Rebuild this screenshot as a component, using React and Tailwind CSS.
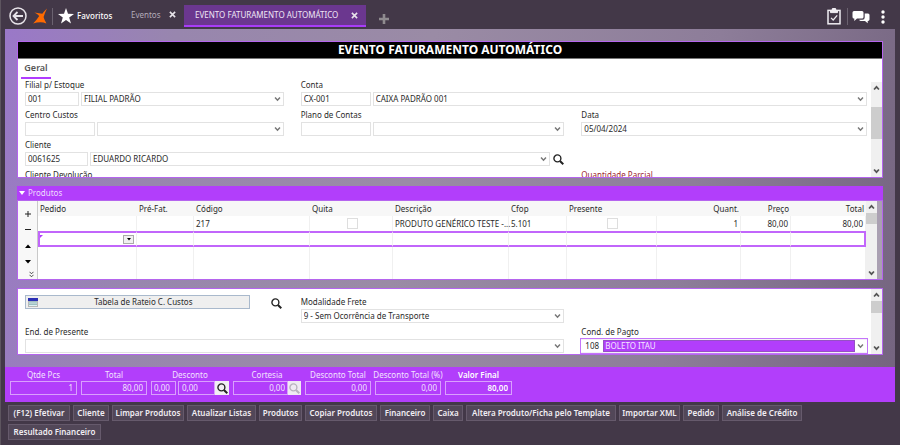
import React from "react";

const ICON_X = "M1 1L7 7M7 1L1 7";

function Chevron({ className = "", up = false, bold = false }) {
  return (
    <svg viewBox="0 0 8 6" className={className} fill="none" stroke="currentColor" strokeWidth={bold ? 2 : 1.7} aria-hidden="true">
      <path d={up ? "M1.2 4.7L4 1.7L6.8 4.7" : "M1.2 1.3L4 4.3L6.8 1.3"} />
    </svg>
  );
}

function Magnifier({ className = "" }) {
  return (
    <svg viewBox="0 0 12 12" className={className} fill="none" stroke="currentColor" aria-hidden="true">
      <circle cx="4.8" cy="4.8" r="3.8" strokeWidth="1.5" />
      <path d="M7.6 7.6L11.2 11.2" strokeWidth="2.2" />
    </svg>
  );
}

function IconButton({ label, className = "", children }) {
  return (
    <button type="button" aria-label={label} className={`flex shrink-0 items-center justify-center ${className}`}>
      {children}
    </button>
  );
}

function Combo({ label, value = "", id, className = "", selectClass = "" }) {
  return (
    <div className={`relative min-w-0 flex-1 ${className}`}>
      <select
        id={id}
        aria-label={id ? undefined : label}
        defaultValue={value}
        className={`block h-[14px] w-full appearance-none rounded-none border border-[#e2e2e2] bg-white pr-4 pl-[2px] leading-3 outline-none ${selectClass}`}
      >
        <option value={value}>{value}</option>
      </select>
      <Chevron className="pointer-events-none absolute top-1 right-[3px] h-[6px] w-[7px] text-[#777]" />
    </div>
  );
}

function Field({ id, label, code, codeWidth = "", value, children, className = "", labelClass = "" }) {
  return (
    <div className={`min-w-0 ${className}`}>
      <label htmlFor={id} className={`block h-[13px] leading-3 whitespace-nowrap ${labelClass}`}>
        {label}
      </label>
      <div className="flex gap-[2px]">
        {code !== undefined && (
          <input id={id} defaultValue={code} className={`h-[14px] shrink-0 border border-[#e2e2e2] bg-white pb-px pl-[2px] outline-none ${codeWidth}`} />
        )}
        <Combo label={label} id={code === undefined ? id : undefined} value={value} />
        {children}
      </div>
    </div>
  );
}

function Scrollbar({ className = "", thumb }) {
  return (
    <div className={`flex w-[11px] shrink-0 flex-col bg-[#f0f0f0] text-[#555] ${className}`} aria-hidden="true">
      <span className="flex h-3 items-center justify-center">
        <Chevron up bold className="h-[6px] w-[7px]" />
      </span>
      <span className="flex-1">
        <span className={`block bg-[#cdcdcd] ${thumb}`} />
      </span>
      <span className="flex h-3 items-center justify-center">
        <Chevron bold className="h-[6px] w-[7px]" />
      </span>
    </div>
  );
}

function TopBar() {
  return (
    <header className="flex h-[29px] items-start pr-[14px] pl-2 text-white">
      <IconButton label="Voltar" className="mt-[7px]">
        <svg viewBox="0 0 18 18" className="size-[18px]" fill="none" stroke="#e8e4ea" strokeWidth="1.5">
          <circle cx="9" cy="9" r="8" />
          <path d="M14 9H5M8.5 5L4.5 9L8.5 13" strokeWidth="1.8" />
        </svg>
      </IconButton>
      <svg viewBox="0 0 15 16" className="mt-2 ml-[6px] h-4 w-[15px]" fill="#ff6a00" aria-hidden="true">
        <path d="M14 .4C11.8 2.3 10.6 4 9.3 5.8L1.4 4.6C3.2 5.5 5 6.6 6.2 8C4.6 10.6 2.6 13.2 .2 15.6C4.4 14.2 9.4 13.8 13.4 15.4C12.4 13.4 11 11 10.6 9C11.4 6 12.6 3.2 14 .4Z" />
      </svg>
      <span className="mt-2 ml-[4px] h-[17px] w-px bg-[#6b6270]" />
      <a href="#favoritos" className="mt-2 ml-[5px] flex h-4 items-center gap-[3px] font-medium">
        <svg viewBox="0 0 16 16" className="size-4" fill="#fff" aria-hidden="true">
          <path d="M8 0L10 5.8L16 5.9L11.2 9.5L13 15.6L8 12L3 15.6L4.8 9.5L0 5.9L6 5.8Z" />
        </svg>
        <span className="w-[37px]">Favoritos</span>
      </a>
      <nav className="ml-[17px] flex items-start">
        <div className="flex h-[29px] items-center">
          <a href="#eventos" className="w-[37px] text-[#b3abb8]">Eventos</a>
          <IconButton label="Fechar Eventos" className="size-[8px]">
            <svg viewBox="0 0 8 8" className="size-[7px]" stroke="#e8e4ea" strokeWidth="1.8"><path d={ICON_X} /></svg>
          </IconButton>
        </div>
        <div className="mt-[5px] ml-2 flex h-[22px] w-[182px] items-center justify-between border-b-2 border-[#a83cf8] bg-[#6b378f] pr-2 pl-[11px]">
          <a href="#evento" aria-current="page" className="whitespace-nowrap text-[#efe6f5]">EVENTO FATURAMENTO AUTOMÁTICO</a>
          <IconButton label="Fechar aba" className="size-[8px]">
            <svg viewBox="0 0 8 8" className="size-[7px]" stroke="#e8e4ea" strokeWidth="1.8"><path d={ICON_X} /></svg>
          </IconButton>
        </div>
        <IconButton label="Nova aba" className="mt-[14px] ml-[13px]">
          <svg viewBox="0 0 10 10" className="size-[10px]" stroke="#8f8b8f" strokeWidth="2.6"><path d="M5 0V10M0 5H10" /></svg>
        </IconButton>
      </nav>
      <div className="mt-2 ml-auto flex h-[17px] items-center">
        <IconButton label="Tarefas">
          <svg viewBox="0 0 14 17" className="h-[17px] w-[14px]" fill="none" stroke="#f0edf2" strokeWidth="1.5">
            <rect x="1" y="2.4" width="12" height="13.4" />
            <path d="M3.5 2.6H10.5V4.6H3.5Z" fill="#f0edf2" strokeWidth="1" />
            <path d="M5.4 2A1.6 1.6 0 0 1 8.6 2" fill="#f0edf2" />
            <path d="M4 9.8L6.2 12L10.2 7.4" strokeWidth="1.2" />
          </svg>
        </IconButton>
        <span className="mr-1 ml-[6px] h-[17px] w-px bg-[#6b6270]" />
        <IconButton label="Mensagens">
          <svg viewBox="0 0 18 14" className="h-[14px] w-[18px]" fill="#fff">
            <path d="M2 1H10Q11.5 1 11.5 2.5V7Q11.5 8.5 10 8.5H5L2.3 11V8.5H2Q.5 8.5 .5 7V2.5Q.5 1 2 1Z" />
            <path d="M12.7 3.6H16Q17.5 3.6 17.5 5.1V9.6Q17.5 11 16 11H15.7V13.2L13 11H9Q7.4 11 7.2 9.7H10.5Q12.7 9.5 12.7 7.4Z" />
          </svg>
        </IconButton>
        <IconButton label="Mais opções" className="ml-[10px]">
          <svg viewBox="0 0 6 14" className="h-[14px] w-[6px]" fill="#fff">
            <circle cx="3" cy="2" r="1.7" /><circle cx="3" cy="7" r="1.7" /><circle cx="3" cy="12" r="1.7" />
          </svg>
        </IconButton>
      </div>
    </header>
  );
}

const GRID = "grid min-w-0 flex-1 grid-cols-[259fr_264fr_286fr] content-start gap-x-[17px] gap-y-[3px] pl-[7px] pr-1";

function GeneralPanel() {
  return (
    <section className="flex h-[137px] flex-col overflow-hidden border border-[#b565ee] bg-white">
      <h1 className="h-[17px] shrink-0 border-b border-[#777] bg-black text-center text-[12px] leading-4 font-bold text-white">
        EVENTO FATURAMENTO AUTOMÁTICO
      </h1>
      <div className="h-5 shrink-0 pl-[3px]">
        <button type="button" className="h-5 w-[30px] border-b-2 border-[#b03cff] text-[9px] font-semibold text-[#555]">Geral</button>
      </div>
      <div className="flex min-h-0 flex-1">
        <div className={GRID}>
          <Field id="filial" label="Filial p/ Estoque" code="001" codeWidth="w-[54px]" value="FILIAL PADRÃO" />
          <Field id="conta" label="Conta" code="CX-001" codeWidth="w-[70px]" value="CAIXA PADRÃO 001" className="col-span-2" />
          <Field id="centro" label="Centro Custos" code="" codeWidth="w-[70px]" />
          <Field id="plano" label="Plano de Contas" code="" codeWidth="w-[70px]" />
          <Field id="data" label="Data" value="05/04/2024" />
          <Field id="cliente" label="Cliente" code="0061625" codeWidth="w-[63px]" value="EDUARDO RICARDO" className="col-span-2">
            <IconButton label="Buscar cliente" className="h-[14px] w-3 text-[#222]"><Magnifier className="size-[11px]" /></IconButton>
          </Field>
          <span />
          <Field id="devolucao" label="Cliente Devolução" code="" codeWidth="w-[63px]" className="col-span-2" />
          <Field id="parcial" label="Quantidade Parcial" labelClass="text-[#9c2530]" />
        </div>
        <Scrollbar className="mt-[3px]" thumb="mt-[13px] h-8" />
      </div>
    </section>
  );
}

const COLUMNS = [
  { name: "Pedido", width: "w-[99px]" },
  { name: "Pré-Fat.", width: "w-[57px]" },
  { name: "Código", width: "w-[116px]" },
  { name: "Quita", width: "w-[83px]" },
  { name: "Descrição", width: "w-[116px]" },
  { name: "Cfop", width: "w-[58px]" },
  { name: "Presente", width: "w-[90px]" },
  { name: "Quant.", width: "w-[84px]", right: true },
  { name: "Preço", width: "w-[50px]", right: true },
  { name: "Total", width: "w-[75px]", right: true },
];

const PRODUCT = ["", "", "217", false, "PRODUTO GENÉRICO TESTE -...", "5.101", false, "1", "80,00", "80,00"];

function ProductsPanel() {
  return (
    <section className="mt-2">
      <h2 className="bg-[#b23efb] text-[#f0dcff]">
        <button type="button" aria-expanded="true" className="flex h-[14px] w-full items-center gap-[3px] pl-[2px] leading-[10px]">
          <svg viewBox="0 0 6 4" className="h-1 w-[6px]" fill="#fff" aria-hidden="true"><path d="M0 0H6L3 4Z" /></svg>
          Produtos
        </button>
      </h2>
      <div className="flex h-[80px] overflow-hidden border border-[#b565ee] bg-white">
        <div className="flex w-5 shrink-0 flex-col items-center border-r border-[#c9c9c9] bg-[#f8f8f8] pt-[5px] text-[#222]">
          <IconButton label="Adicionar" className="h-4 w-4">
            <svg viewBox="0 0 6 6" className="size-[6px]" stroke="currentColor" strokeWidth="1"><path d="M3 0V6M0 3H6" /></svg>
          </IconButton>
          <IconButton label="Remover" className="h-4 w-4">
            <svg viewBox="0 0 6 6" className="size-[6px]" stroke="currentColor" strokeWidth="1"><path d="M0 2.5H6" /></svg>
          </IconButton>
          <IconButton label="Subir" className="h-4 w-4">
            <svg viewBox="0 0 6 4" className="h-[4px] w-[6px]"><path d="M0 4H6L3 .5Z" /></svg>
          </IconButton>
          <IconButton label="Descer" className="h-4 w-4">
            <svg viewBox="0 0 6 4" className="h-[4px] w-[6px]"><path d="M0 0H6L3 3.5Z" /></svg>
          </IconButton>
          <IconButton label="Mais ações" className="mr-[3px] h-2 w-[5px] self-end">
            <svg viewBox="0 0 5 7" className="h-[7px] w-[5px]" fill="none" stroke="currentColor" strokeWidth=".8"><path d="M.5 .8L2.5 2.8L4.5 .8M.5 3.8L2.5 5.8L4.5 3.8" /></svg>
          </IconButton>
        </div>
        <div className="min-w-0 flex-1">
          <table className="w-full table-fixed border-separate border-spacing-0">
            <thead>
              <tr className="h-[15px] bg-[#f7f7f7] text-left">
                {COLUMNS.map((c) => (
                  <th key={c.name} scope="col" className={`px-[2px] font-normal ${c.width} ${c.right ? "text-right" : ""}`}>{c.name}</th>
                ))}
              </tr>
            </thead>
            <tbody>
              <tr className="h-[15px]">
                {PRODUCT.map((v, i) => (
                  <td key={i} className={`border-r border-[#f0f0f0] pl-[2px] whitespace-nowrap ${COLUMNS[i].right ? "pr-[2px] text-right" : ""}`}>
                    {v === false ? (
                      <input type="checkbox" aria-label={COLUMNS[i].name} className="mx-auto block size-[11px] appearance-none border border-[#dedede] bg-white" />
                    ) : v}
                  </td>
                ))}
              </tr>
              <tr className="h-[16px]">
                {COLUMNS.map((c, i) => (
                  <td key={c.name} className="border-y-2 border-r border-y-[#c166fb] border-r-[#f0f0f0] p-0 first:border-l-2 first:border-l-[#c166fb] last:border-r-2 last:border-r-[#c166fb]">
                    {i === 0 && (
                      <div className="flex items-start justify-between pr-[2px]">
                        <svg viewBox="0 0 3 3" className="size-[3px]" fill="#b23efb" aria-hidden="true"><path d="M0 0H3L0 3Z" /></svg>
                        <IconButton label="Escolher pedido" className="h-[9px] w-[11px] border border-[#aaa] bg-[#f0f0f0]">
                          <svg viewBox="0 0 4 3" className="h-[3px] w-1"><path d="M0 0H4L2 2.6Z" /></svg>
                        </IconButton>
                      </div>
                    )}
                  </td>
                ))}
              </tr>
              <tr className="h-8">
                {COLUMNS.map((c) => <td key={c.name} className="border-r border-[#f0f0f0]" />)}
              </tr>
            </tbody>
          </table>
        </div>
        <Scrollbar thumb="h-[11px]" />
        <span className="w-[5px] bg-[#aaa0b2]" />
      </div>
    </section>
  );
}

function DetailsPanel() {
  return (
    <section className="mt-2 flex h-[67px] overflow-hidden border border-[#b565ee] bg-white">
      <div className={`${GRID} pt-[7px]`}>
        <div className="flex items-start">
          <button type="button" className="-mt-px flex h-[14px] flex-1 items-center border border-[#a9b9cc] bg-[#efefef] pl-[2px]">
            <svg viewBox="0 0 10 9" className="h-[9px] w-[10px]" aria-hidden="true">
              <rect width="10" height="9" fill="#b7b7b7" /><rect width="10" height="3" fill="#2b2fb5" />
              <path d="M1 5H9M1 7.5H9" stroke="#dff3f3" /><path d="M1 4H9M1 6.2H9" stroke="#7fc7cf" strokeWidth=".7" />
            </svg>
            <span className="flex-1 text-center">Tabela de Rateio C. Custos</span>
          </button>
          <IconButton label="Buscar rateio" className="ml-5 h-[14px] w-[14px] text-[#222]"><Magnifier className="size-[11px]" /></IconButton>
        </div>
        <Field id="frete" label="Modalidade Frete" value="9 - Sem Ocorrência de Transporte" />
        <span />
        <Field id="presente" label="End. de Presente" className="col-span-2" />
        <div>
          <label htmlFor="pagto" className="block h-3 leading-3">Cond. de Pagto</label>
          <div className="-mx-px flex h-4 border border-[#c475fa] bg-[#f4f0f7] py-px">
            <input id="pagto" defaultValue="108" className="w-[22px] shrink-0 bg-white pl-1 outline-none" />
            <div className="relative flex min-w-0 flex-1 bg-white">
              <select aria-label="Condição de pagamento" className="mr-3 block h-3 min-w-0 flex-1 appearance-none rounded-none border border-[#9551c4] bg-[#b23efb] pl-px leading-[10px] text-[#f4e6ff] outline-none">
                <option>BOLETO ITAU</option>
              </select>
              <Chevron className="pointer-events-none absolute top-[3px] right-[3px] h-[6px] w-[7px] text-[#777]" />
            </div>
          </div>
        </div>
      </div>
      <Scrollbar thumb="h-3" />
    </section>
  );
}

function TotalBox({ label, value, className = "", strong = false }) {
  return (
    <label className={`flex shrink-0 flex-col ${strong ? "font-semibold text-white" : ""} ${className}`}>
      <span className="flex h-[14px] justify-center leading-[15px] whitespace-nowrap">{label}</span>
      <input readOnly value={value} className="h-[14px] w-full border border-[#d9a0fd] bg-transparent pr-[3px] pb-px text-right outline-none" />
    </label>
  );
}

function Totals() {
  return (
    <section className="mt-3 flex h-[35px] gap-1 bg-[#b23efb] pl-[5px] text-[#f3e2ff]">
      <TotalBox label="Qtde Pcs" value="1" className="w-[67px]" />
      <TotalBox label="Total" value="80,00" className="w-[66px]" />
      <div role="group" aria-labelledby="desconto" className="w-[78px] shrink-0">
        <div id="desconto" className="h-[14px] text-center leading-[15px]">Desconto</div>
        <div className="flex">
          <input readOnly aria-label="Desconto percentual" value="0,00" className="mr-[2px] h-[14px] w-[25px] shrink-0 border border-[#d9a0fd] bg-transparent pb-px pl-[2px] outline-none" />
          <input readOnly aria-label="Desconto valor" value="0,00" className="h-[14px] min-w-0 flex-1 border border-[#d9a0fd] bg-transparent pb-px pl-[3px] outline-none" />
          <IconButton label="Buscar desconto" className="h-[14px] w-[14px] bg-[#f1eef3] text-[#222]"><Magnifier className="size-[11px]" /></IconButton>
        </div>
      </div>
      <div role="group" aria-labelledby="cortesia" className="w-[68px] shrink-0">
        <div id="cortesia" className="h-[14px] text-center leading-[15px]">Cortesia</div>
        <div className="flex">
          <input readOnly aria-label="Cortesia" value="0,00" className="h-[14px] min-w-0 flex-1 border border-[#d9a0fd] bg-transparent pr-[2px] pb-px text-right outline-none" />
          <IconButton label="Buscar cortesia" className="h-[14px] w-[13px] bg-[#efeaf2] text-[#b8b2bd]"><Magnifier className="size-[11px]" /></IconButton>
        </div>
      </div>
      <TotalBox label="Desconto Total" value="0,00" className="w-[66px]" />
      <TotalBox label="Desconto Total (%)" value="0,00" className="w-[66px]" />
      <TotalBox label="Valor Final" value="80,00" className="w-[67px]" strong />
    </section>
  );
}

const ACTIONS = [
  ["(F12) Efetivar", "w-[62px]"],
  ["Cliente", "w-9"],
  ["Limpar Produtos", "w-[72px]"],
  ["Atualizar Listas", "w-[69px]"],
  ["Produtos", "w-[43px]"],
  ["Copiar Produtos", "w-[72px]"],
  ["Financeiro", "w-[50px]"],
  ["Caixa", "w-[30px]"],
  ["Altera Produto/Ficha pelo Template", "w-[150px]"],
  ["Importar XML", "w-[61px]"],
  ["Pedido", "w-9"],
  ["Análise de Crédito", "w-[80px]"],
  ["Resultado Financeiro", "w-[93px]"],
];

export default function App() {
  return (
    <div className="min-h-screen border-l border-[#5d555f] bg-[#433848] font-['Noto_Sans',sans-serif] text-[8px] leading-3 text-[#2a2a2a]">
      <TopBar />
      <main className="mr-[5px] ml-1">
        <div className="bg-[linear-gradient(100deg,#9a78c8_0%,#9886ae_18%,#9a8ba5_45%,#8d7d99_75%,#74647f_100%)]">
          <div className="px-3 pt-3">
            <GeneralPanel />
            <ProductsPanel />
            <DetailsPanel />
          </div>
          <Totals />
        </div>
        <footer className="flex flex-wrap gap-[3px] px-[3px] pt-[3px]">
          {ACTIONS.map(([name, width]) => (
            <button key={name} type="button" className={`h-4 border border-[#665a6c] bg-[#524758] font-semibold whitespace-nowrap text-[#f1eef3] ${width}`}>
              {name}
            </button>
          ))}
        </footer>
      </main>
    </div>
  );
}
